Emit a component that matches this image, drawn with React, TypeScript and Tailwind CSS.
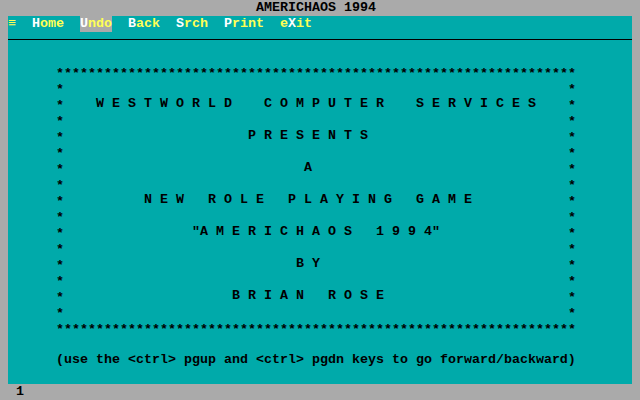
import React from "react";

const INNER = 63;

function inner(col: number, text: string): string {
  const arr = Array(INNER).fill(" ");
  const start = col - 7;
  for (let k = 0; k < text.length; k++) arr[start + k] = text[k];
  return arr.join("");
}

function Star({ children }: { children: React.ReactNode }) {
  return <span className="leading-none align-[-2px]">{children}</span>;
}

function Row({ children, className = "" }: { children?: React.ReactNode; className?: string }) {
  return <div className={"h-4 whitespace-pre " + className}>{children}</div>;
}

function BoxRow({ col, text }: { col?: number; text?: string }) {
  const mid = col !== undefined && text !== undefined ? inner(col, text) : " ".repeat(INNER);
  return (
    <Row>
      {"      "}
      <Star>*</Star>
      {mid}
      <Star>*</Star>
    </Row>
  );
}

function MenuItem({ parts }: { parts: [string, boolean][] }) {
  return (
    <>
      {parts.map(([t, hot], i) => (
        <span key={i} className={hot ? "text-white" : "text-[#ffff55]"}>
          {t}
        </span>
      ))}
    </>
  );
}

export default function App() {
  return (
    <div className="w-[640px] h-[400px] bg-[#aaaaaa] font-['Liberation_Mono',monospace] font-bold text-[13.333px] leading-[16px] text-black overflow-hidden">
      <Row className="pl-[256px]">AMERICHAOS 1994</Row>
      <div className="mx-2 h-[368px] bg-[#00aaaa]">
        <Row>
          <span className="text-[#ffff55]">≡</span>
          {"  "}
          <MenuItem parts={[["H", true], ["ome", false]]} />
          {"  "}
          <span className="bg-[#aaaaaa] inline-block h-4 align-top">
            <MenuItem parts={[["U", true], ["ndo", false]]} />
          </span>
          {"  "}
          <MenuItem parts={[["B", true], ["ack", false]]} />
          {"  "}
          <MenuItem parts={[["S", true], ["rch", false]]} />
          {"  "}
          <MenuItem parts={[["P", true], ["rint", false]]} />
          {"  "}
          <MenuItem parts={[["e", false], ["X", true], ["it", false]]} />
        </Row>
        <div className="h-4 flex flex-col">
          <div className="h-[7px]" />
          <div className="h-px bg-black" />
        </div>
        <Row />
        <Row>
          {"      "}
          <Star>{"*".repeat(65)}</Star>
        </Row>
        <BoxRow />
        <BoxRow col={11} text="W E S T W O R L D    C O M P U T E R    S E R V I C E S" />
        <BoxRow />
        <BoxRow col={30} text="P R E S E N T S" />
        <BoxRow />
        <BoxRow col={37} text="A" />
        <BoxRow />
        <BoxRow col={17} text="N E W   R O L E   P L A Y I N G   G A M E" />
        <BoxRow />
        <BoxRow col={23} text={'"A M E R I C H A O S   1 9 9 4"'} />
        <BoxRow />
        <BoxRow col={36} text="B Y" />
        <BoxRow />
        <BoxRow col={28} text="B R I A N   R O S E" />
        <BoxRow />
        <Row>
          {"      "}
          <Star>{"*".repeat(65)}</Star>
        </Row>
        <Row />
        <Row>{"      (use the <ctrl> pgup and <ctrl> pgdn keys to go forward/backward)"}</Row>
        <Row />
      </div>
      <Row className="pl-4">1</Row>
    </div>
  );
}
